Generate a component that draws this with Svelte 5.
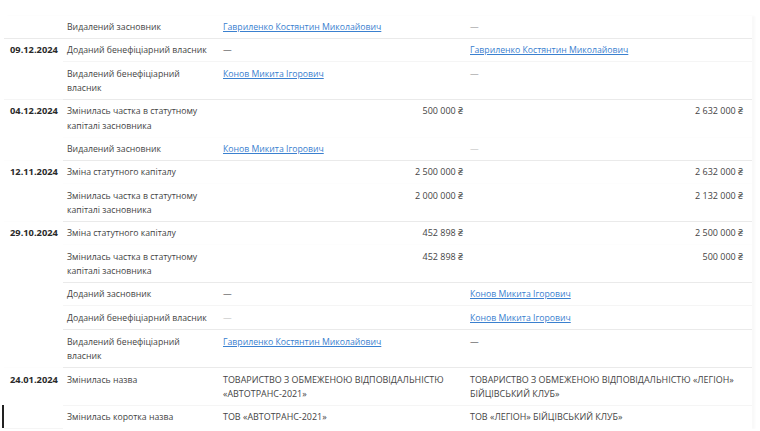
<script>
    const uah = "\u20b4";
    const gavr = "Гавриленко Костянтин Миколайович";
    const konov = "Конов Микита Ігорович";
    const share = "Змінилась частка в статутному капіталі засновника";
    const capital = "Зміна статутного капіталу";
    const llc = "ТОВАРИСТВО З ОБМЕЖЕНОЮ ВІДПОВІДАЛЬНІСТЮ";

    const groups = [
        { date: "", rows: [
            { name: "Видалений засновник", was: { link: gavr }, now: { dash: "faint" } }
        ] },
        { date: "09.12.2024", rows: [
            { name: "Доданий бенефіціарний власник", was: { dash: "dark" }, now: { link: gavr } },
            { name: "Видалений бенефіціарний власник", was: { link: konov }, now: { dash: "faint" } }
        ] },
        { date: "04.12.2024", rows: [
            { name: share, was: { money: "500 000 " + uah }, now: { money: "2 632 000 " + uah }, line: "none" },
            { name: "Видалений засновник", was: { link: konov }, now: { dash: "pale" } }
        ] },
        { date: "12.11.2024", rows: [
            { name: capital, was: { money: "2 500 000 " + uah }, now: { money: "2 632 000 " + uah }, line: "none" },
            { name: share, was: { money: "2 000 000 " + uah }, now: { money: "2 132 000 " + uah } }
        ] },
        { date: "29.10.2024", rows: [
            { name: capital, was: { money: "452 898 " + uah }, now: { money: "2 500 000 " + uah }, line: "none" },
            { name: share, was: { money: "452 898 " + uah }, now: { money: "500 000 " + uah }, line: "strong" },
            { name: "Доданий засновник", was: { dash: "dark" }, now: { link: konov } },
            { name: "Доданий бенефіціарний власник", was: { dash: "pale" }, now: { link: konov }, tall: true, line: "strong" },
            { name: "Видалений бенефіціарний власник", was: { link: gavr }, now: { dash: "dark" } }
        ] },
        { date: "24.01.2024", rows: [
            { name: "Змінилась назва", was: { text: llc + " «АВТОТРАНС-2021»" }, now: { text: llc + " «ЛЕГІОН» БІЙЦІВСЬКИЙ КЛУБ»" } },
            { name: "Змінилась коротка назва", was: { text: "ТОВ «АВТОТРАНС-2021»" }, now: { text: "ТОВ «ЛЕГІОН» БІЙЦІВСЬКИЙ КЛУБ»" } }
        ] }
    ];
</script>

<style>
    :global(body) {
        background: #fff;
        overflow: hidden;
    }

    .page {
        padding: 16px 8px 0 4px;
        font-family: "Open Sans", "Noto Sans", sans-serif;
        font-size: 8.7px;
        line-height: 14.6px;
        color: #444;
        position: relative;
    }

    table {
        width: 748px;
        border-collapse: collapse;
        table-layout: fixed;
        box-shadow: 3px 0 2px #f9f9f9;
    }

    td {
        padding: 4.3px 6px 3.3px 4px;
        vertical-align: top;
        border-bottom: 1px solid #f5f5f5;
    }

    tr.tall td {
        padding-bottom: 4.3px;
    }

    tr.none td {
        border-bottom-color: #fdfdfd;
    }

    tr.strong td,
    tr.last td {
        border-bottom-color: #eaeaea;
    }

    tr.end td {
        border-bottom-color: #fff;
    }

    .date {
        padding-left: 6px;
        padding-right: 0;
        font-size: 9.3px;
        font-weight: 700;
        color: #2a2a2a;
    }

    .was.money {
        text-align: right;
        padding-right: 3px;
    }

    .now.money {
        text-align: right;
        padding-right: 9px;
    }

    .money {
        font-size: 9px;
    }

    .caps {
        font-size: 8.95px;
    }

    a {
        color: #3a80cf;
        text-decoration: underline;
    }

    .dark {
        color: #333;
    }

    .faint {
        color: #888;
    }

    .pale {
        color: #bbb;
    }

    .caret {
        position: absolute;
        left: 2px;
        top: 405px;
        width: 1.5px;
        height: 23px;
        background: #222;
    }
</style>

{#snippet cell(v)}
    {#if v.link}
        <a href="#top">{v.link}</a>
    {:else if v.money}
        {v.money}
    {:else if v.text}
        <span class="caps">{v.text}</span>
    {:else}
        <span class={v.dash}>—</span>
    {/if}
{/snippet}

<div class="page">
    <table>
        <colgroup>
            <col style="width: 59px" />
            <col style="width: 156px" />
            <col style="width: 247px" />
            <col style="width: 286px" />
        </colgroup>
        <tbody>
            {#each groups as group, g}
                {#each group.rows as row, i}
                    <tr class={row.line} class:tall={row.tall} class:last={i === group.rows.length - 1} class:end={g === groups.length - 1 && i === group.rows.length - 1}>
                        {#if i === 0}
                            <td class="date" rowspan={group.rows.length}>{group.date}</td>
                        {/if}
                        <td>{row.name}</td>
                        <td class="was" class:money={row.was.money}>{@render cell(row.was)}</td>
                        <td class="now" class:money={row.now.money}>{@render cell(row.now)}</td>
                    </tr>
                {/each}
            {/each}
        </tbody>
    </table>
    <div class="caret"></div>
</div>
